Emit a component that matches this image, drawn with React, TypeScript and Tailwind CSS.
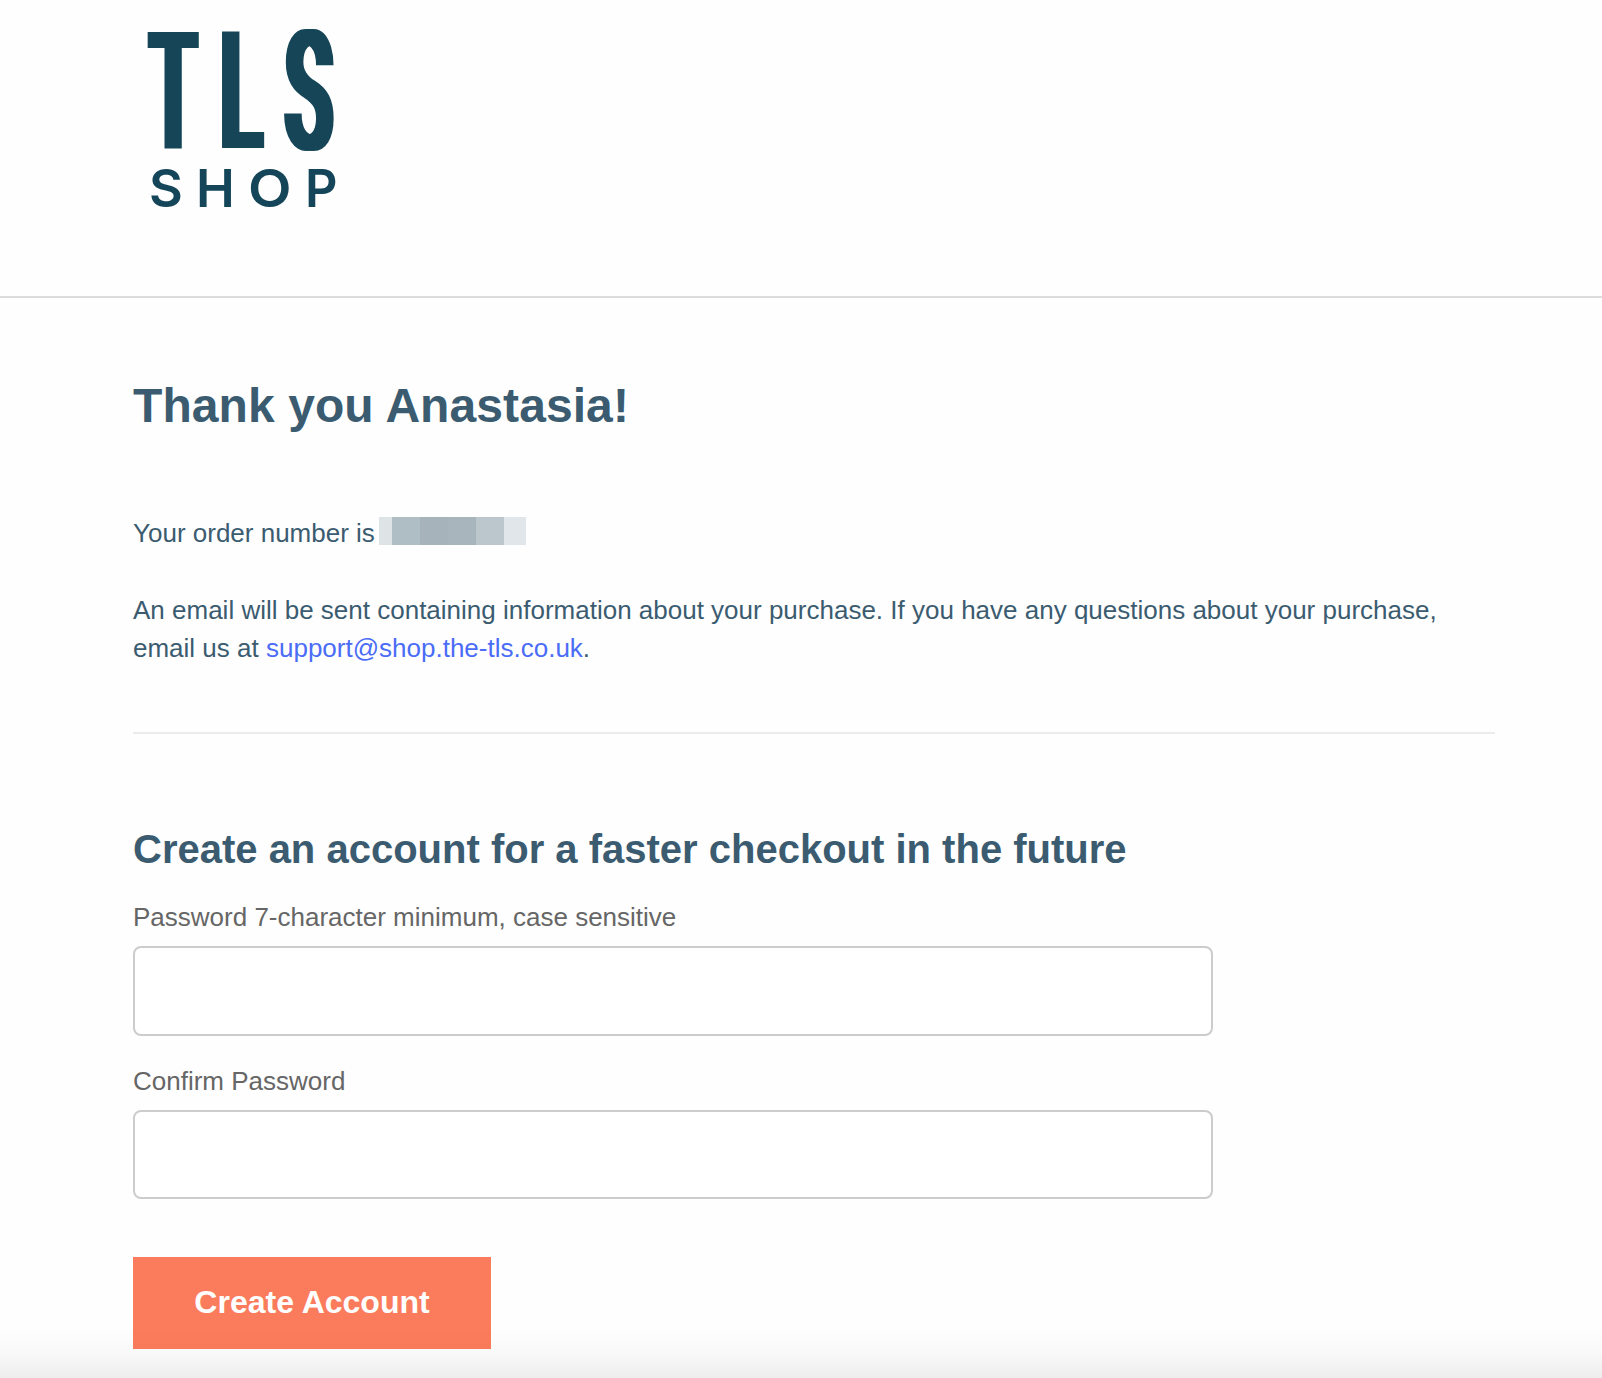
import { useState } from "react"

// Redacted order number, one entry per mosaic cell
const mosaic = [
  "w-[13px] bg-[#dee3e5]",
  "w-7 bg-[#afbdc5]",
  "w-7 bg-[#a6b3bb]",
  "w-7 bg-[#a8b5bd]",
  "w-7 bg-[#bcc7cd]",
  "w-[22px] bg-[#e1e6ea]",
]

function Logo() {
  return (
    <svg
      width="230"
      height="220"
      viewBox="130 10 230 220"
      className="block overflow-visible"
      fill="#144559"
      role="img"
      aria-label="TLS Shop"
    >
      <defs>
        {/* Thickens the upright strokes of the condensed letters */}
        <filter id="heavy" x="-20%" y="-5%" width="140%" height="110%">
          <feMorphology operator="dilate" radius="4 0" />
        </filter>
      </defs>
      <g filter="url(#heavy)" fontFamily="Roboto, sans-serif" fontWeight="500" fontSize="163">
        <text transform="translate(150 148) scale(.467 1)">T</text>
        <text transform="translate(220.4 148) scale(.47 1)">L</text>
        <text transform="translate(285.3 149.3) scale(.478 1.02)">S</text>
      </g>
      <g fontFamily="Inter, sans-serif" fontWeight="600" fontSize="52">
        <text transform="translate(149 207)">S</text>
        <text transform="translate(196 207)">H</text>
        <text transform="translate(248 207) scale(1.09 1)">O</text>
        <text transform="translate(305 207) scale(.97 1)">P</text>
      </g>
    </svg>
  )
}

function PasswordField({ label, id }: { label: string; id: string }) {
  const [value, setValue] = useState("")

  return (
    <div className="flex flex-col">
      <label htmlFor={id} className="mb-[9px] text-[26px] leading-[39px] text-[#666666]">
        {label}
      </label>
      <input
        id={id}
        type="password"
        value={value}
        onChange={(e) => setValue(e.target.value)}
        className="h-[89.5px] w-[1080px] rounded-lg border-2 border-[#cccccc] bg-white px-6 text-[26px]"
      />
    </div>
  )
}

export default function App() {
  return (
    <div className="relative h-[1378px] w-[1602px] overflow-hidden bg-[#fefefe] font-['Liberation_Sans',Arial,sans-serif] text-[#3b5c70]">
      <header className="h-[298px] border-b-2 border-[#dcdcdc] pt-[10px] pl-[130px]">
        <Logo />
      </header>

      <main className="pr-[107px] pl-[133px]">
        <h1 className="pt-[78px] text-[48px] leading-[60px] font-bold tracking-[0.08px]">Thank you Anastasia!</h1>

        <div className="mt-[78px] flex h-[39px] items-center text-[26px] leading-[39px]">
          <span>Your order number is</span>
          <span className="mb-[5px] ml-1 flex h-7">
            {mosaic.map((cell, i) => (
              <span key={i} className={cell} />
            ))}
          </span>
        </div>

        <p className="mt-[38px] text-[26px] leading-[38px]">
          An email will be sent containing information about your purchase. If you have any questions about your purchase,
          <br />
          email us at{" "}
          <a href="mailto:support@shop.the-tls.co.uk" className="text-[#4a6cf7]">
            support@shop.the-tls.co.uk
          </a>
          .
        </p>

        <hr className="mt-[65px] border-t-2 border-[#ebebeb]" />

        <h2 className="mt-[90px] text-[40px] leading-[50px] font-bold">
          Create an account for a faster checkout in the future
        </h2>

        <form className="mt-6 flex flex-col gap-[26px]" onSubmit={(e) => e.preventDefault()}>
          <PasswordField id="password" label="Password 7-character minimum, case sensitive" />
          <PasswordField id="confirm" label="Confirm Password" />
          <button className="mt-8 h-[92px] w-[358px] bg-[#fb7c5c] pb-0.5 text-[32px] font-bold text-white">
            Create Account
          </button>
        </form>
      </main>

      {/* Bottom edge shade */}
      <div className="pointer-events-none absolute inset-x-0 bottom-0 h-[54px] bg-gradient-to-b from-black/0 via-black/[0.018] to-black/[0.068]" />
    </div>
  )
}
